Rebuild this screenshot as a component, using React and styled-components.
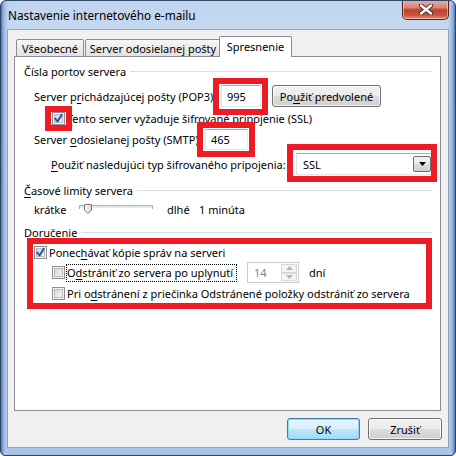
import React from 'react';
import styled, { createGlobalStyle } from 'styled-components';

const FONT = `"Noto Sans", "Liberation Sans", sans-serif`;

const Global = createGlobalStyle`
  html, body { margin: 0; padding: 0; background: #ffffff; }
  body { font-family: ${FONT}; font-size: 11px; color: #000; }
  * { box-sizing: border-box; }
  u { text-decoration: underline; text-underline-offset: 2px; }
`;

const Window = styled.div`
  position: relative;
  width: 456px;
  height: 456px;
  border: 1px solid #2f4566;
  border-radius: 6px 6px 5px 5px;
  background:
    linear-gradient(90deg, #4a70a8 0px, #8aabd8 2px, #b4cae8 5px, rgba(190,210,236,0) 8px,
      rgba(190,210,236,0) calc(100% - 8px), #b4cae8 calc(100% - 5px), #8aabd8 calc(100% - 2px), #4a70a8 100%),
    linear-gradient(180deg, #bfd4ee 0px, #c6d9ef 28px, #b3cbe8 60%, #a9c3e4 100%);
  padding: 0 6px 7px 6px;
  display: flex;
  flex-direction: column;
  overflow: hidden;
  font-family: ${FONT};
  font-size: 11px;
`;

const TitleBar = styled.div`
  height: 28px;
  flex: none;
  display: flex;
  align-items: flex-start;
  justify-content: space-between;
`;

const Title = styled.div`
  line-height: 29px;
  font-size: 11.8px;
  padding-left: 1px;
  color: #000;
  white-space: nowrap;
`;

const CloseBtn = styled.div`
  width: 47px;
  height: 20px;
  margin-top: -1px;
  border: 1px solid #5b2219;
  border-top: none;
  border-radius: 0 0 5px 5px;
  background: linear-gradient(180deg, #e9b0a6 0%, #d98576 40%, #c2412c 52%, #c9503a 78%, #e58a6d 100%);
  box-shadow: inset 0 0 0 1px rgba(255, 220, 210, 0.55);
  display: flex;
  align-items: center;
  justify-content: center;
`;

const Client = styled.div`
  flex: 1;
  background: #f0f0f0;
  border: 1px solid #8fa3bf;
  padding: 7px 6px 0 6px;
  display: flex;
  flex-direction: column;
`;

const TabStrip = styled.div`
  height: 20px;
  display: flex;
  align-items: flex-end;
  padding-left: 2px;
  margin-bottom: -1px;
  position: relative;
  z-index: 1;
`;

const Tab = styled.div`
  width: ${(p) => p.$w}px;
  height: ${(p) => (p.$active ? 21 : 18)}px;
  margin-left: ${(p) => p.$ml || 0}px;
  border: 1px solid #898c95;
  border-bottom: ${(p) => (p.$active ? 'none' : '1px solid #898c95')};
  border-radius: 2px 2px 0 0;
  background: ${(p) => (p.$active ? '#ffffff' : 'linear-gradient(180deg, #f7f7f7 0%, #ececec 50%, #e2e2e2 100%)')};
  display: flex;
  align-items: center;
  justify-content: center;
  padding-bottom: ${(p) => (p.$active ? 2 : 0)}px;
  white-space: nowrap;
`;

const Panel = styled.div`
  width: 427px;
  height: 355px;
  background: #ffffff;
  border: 1px solid #898c95;
  padding: 6px 8px 0 9px;
  display: flex;
  flex-direction: column;
`;

const GroupHeader = styled.div`
  height: 16px;
  margin-top: ${(p) => p.$mt || 0}px;
  display: flex;
  align-items: center;
  white-space: nowrap;
`;

const HeaderLine = styled.div`
  flex: 1;
  height: 1px;
  background: #d5dfe5;
  margin-left: 4px;
`;

const Row = styled.div`
  height: ${(p) => p.$h}px;
  margin-top: ${(p) => p.$mt}px;
  padding-left: ${(p) => p.$indent || 0}px;
  display: flex;
  align-items: center;
  white-space: nowrap;
`;

const Label = styled.span`
  flex: none;
  width: ${(p) => (p.$w ? `${p.$w}px` : 'auto')};
  margin-left: ${(p) => p.$ml || 0}px;
  color: #000;
  white-space: nowrap;
`;

const TextBox = styled.div`
  width: ${(p) => p.$w}px;
  height: ${(p) => p.$h}px;
  flex: none;
  border: 1px solid #e3e9ef;
  border-top-color: #abadb3;
  border-left-color: #e2e3ea;
  background: #fff;
  display: flex;
  align-items: center;
  padding-left: 5px;
`;

const Button = styled.div`
  width: ${(p) => p.$w}px;
  height: 22px;
  flex: none;
  margin-left: ${(p) => p.$ml || 0}px;
  border: 1px solid ${(p) => (p.$default ? '#3c7fb1' : '#707070')};
  border-radius: 3px;
  background: ${(p) =>
    p.$default
      ? 'linear-gradient(180deg, #eaf6fd 0%, #d9f0fc 48%, #bee6fd 52%, #a7d9f5 100%)'
      : 'linear-gradient(180deg, #f2f2f2 0%, #ebebeb 48%, #dddddd 52%, #cfcfcf 100%)'};
  box-shadow: ${(p) =>
    p.$default ? 'inset 0 0 0 1px #8ed8f8' : 'inset 0 0 0 1px rgba(255,255,255,0.75)'};
  display: flex;
  align-items: center;
  justify-content: center;
  white-space: nowrap;
`;

const CheckBoxBox = styled.span`
  position: relative;
  width: 13px;
  height: 13px;
  flex: none;
  border: 1px solid #8e8f8f;
  background: linear-gradient(135deg, #cdd0d4 0%, #e9eaeb 55%, #f6f6f6 100%);
  box-shadow: inset 0 0 0 1px #f4f4f4, inset 0 0 0 2px #b6b9bd;
  display: flex;
  align-items: center;
  justify-content: center;
`;

const Combo = styled.div`
  width: 138px;
  height: 22px;
  flex: none;
  border: 1px solid #e3e9ef;
  border-top-color: #abadb3;
  border-left-color: #e2e3ea;
  background: #fff;
  display: flex;
  align-items: center;
  justify-content: space-between;
  padding: 0 2px 0 6px;
`;

const DropBtn = styled.div`
  width: 18px;
  height: 16px;
  border: 1px solid #707070;
  border-radius: 2px;
  background: linear-gradient(180deg, #f2f2f2 0%, #ebebeb 48%, #dddddd 52%, #cfcfcf 100%);
  display: flex;
  align-items: center;
  justify-content: center;
`;

const Spin = styled.div`
  width: 52px;
  height: 21px;
  flex: none;
  margin-left: 10px;
  border: 1px solid #c9cbce;
  background: #fff;
  display: flex;
  align-items: stretch;
  justify-content: space-between;
  padding: 1px 1px 1px 6px;
`;

const SpinText = styled.span`
  align-self: center;
  color: #838383;
`;

const SpinButtons = styled.div`
  width: 16px;
  display: flex;
  flex-direction: column;
`;

const SpinPart = styled.div`
  flex: 1;
  border: 1px solid #d9d9d9;
  background: #f4f4f4;
  display: flex;
  align-items: center;
  justify-content: center;
`;

const FocusLabel = styled.span`
  flex: none;
  width: 171px;
  height: 18px;
  margin-left: 1px;
  outline: 1px dotted #000;
  outline-offset: -1px;
  display: flex;
  align-items: center;
  padding-left: 1px;
`;

const RedBox = styled.div`
  position: absolute;
  left: ${(p) => p.$x - 1}px;
  top: ${(p) => p.$y - 1}px;
  width: ${(p) => p.$w}px;
  height: ${(p) => p.$h}px;
  border: 6px solid #ed1c24;
  pointer-events: none;
`;

const Footer = styled.div`
  margin-top: 7px;
  display: flex;
  justify-content: flex-end;
  gap: 8px;
`;

function CheckBox({ checked }) {
  return (
    <CheckBoxBox>
      {checked && (
        <svg width="11" height="11" viewBox="0 0 11 11" style={{ position: 'absolute', left: 0, top: 0 }}>
          <path d="M2.2 5.6 L4.6 8.4 L8.8 1.8" fill="none" stroke="#9fb2dc" strokeWidth="2.6" strokeLinecap="round" strokeLinejoin="round" />
          <path d="M2.2 5.6 L4.6 8.4 L8.8 1.8" fill="none" stroke="#2f4a96" strokeWidth="1.6" strokeLinecap="round" strokeLinejoin="round" />
        </svg>
      )}
    </CheckBoxBox>
  );
}

function SliderDrawing() {
  return (
    <svg width="74" height="16" viewBox="0 0 74 16">
      <rect x="0.5" y="4.5" width="73" height="3" fill="#e7eaea" stroke="#b0b0b0" />
      <line x1="1" y1="7.5" x2="73" y2="7.5" stroke="#ffffff" />
      <defs>
        <linearGradient id="thumbG" x1="0" y1="0" x2="1" y2="0">
          <stop offset="0" stopColor="#fbfbfb" />
          <stop offset="1" stopColor="#d8d8d8" />
        </linearGradient>
      </defs>
      <path d="M5.5 3.5 H12.5 V9 L9 12.5 L5.5 9 Z" fill="url(#thumbG)" stroke="#7c7c7c" />
    </svg>
  );
}

export default function App() {
  return (
    <>
      <Global />
      <Window>
        <TitleBar>
          <Title>Nastavenie internetového e-mailu</Title>
          <CloseBtn>
            <svg width="14" height="11" viewBox="0 0 14 11">
              <path d="M2 1.5 L12 9.5 M12 1.5 L2 9.5" stroke="#4a2a26" strokeWidth="4.2" strokeLinecap="round" />
              <path d="M2 1.5 L12 9.5 M12 1.5 L2 9.5" stroke="#ffffff" strokeWidth="2.4" strokeLinecap="round" />
            </svg>
          </CloseBtn>
        </TitleBar>
        <Client>
          <TabStrip>
            <Tab $w={68}>Všeobecné</Tab>
            <Tab $w={136} $ml={1}>Server odosielanej pošty</Tab>
            <Tab $w={73} $ml={-2} $active>Spresnenie</Tab>
          </TabStrip>
          <Panel>
            <GroupHeader>
              Čísla portov servera
              <HeaderLine />
            </GroupHeader>
            <Row $h={22} $mt={6} $indent={10}>
              <Label $w={187}>Server p<u>r</u>ichádzajúcej pošty (POP3):</Label>
              <TextBox $w={40} $h={22}>995</TextBox>
              <Button $w={109} $ml={11}>Po<u>u</u>žiť predvolené</Button>
            </Row>
            <Row $h={15} $mt={4} $indent={28}>
              <CheckBox checked />
              <Label $ml={2}><u>T</u>ento server vyžaduje šifrované pripojenie (SSL)</Label>
            </Row>
            <Row $h={21} $mt={3} $indent={10}>
              <Label $w={171}>Server <u>o</u>dosielanej pošty (SMTP):</Label>
              <TextBox $w={43} $h={21}>465</TextBox>
            </Row>
            <Row $h={22} $mt={3} $indent={27}>
              <Label $w={245}><u>P</u>oužiť nasledujúci typ šifrovaného pripojenia:</Label>
              <Combo>
                SSL
                <DropBtn>
                  <svg width="7" height="4" viewBox="0 0 7 4">
                    <path d="M0 0 H7 L3.5 4 Z" fill="#000" />
                  </svg>
                </DropBtn>
              </Combo>
            </Row>
            <GroupHeader $mt={7}>
              <span><u>Č</u>asové limity servera</span>
              <HeaderLine />
            </GroupHeader>
            <Row $h={16} $mt={3} $indent={10}>
              <Label $w={45}>krátke</Label>
              <SliderDrawing />
              <Label $w={32} $ml={14}>dlhé</Label>
              <Label>1 minúta</Label>
            </Row>
            <GroupHeader $mt={7}>
              Doručenie
              <HeaderLine />
            </GroupHeader>
            <Row $h={15} $mt={5} $indent={10}>
              <CheckBox checked />
              <Label $ml={2}>Ponec<u>h</u>ávať kópie správ na serveri</Label>
            </Row>
            <Row $h={21} $mt={2} $indent={28}>
              <CheckBox />
              <FocusLabel>O<u>d</u>strániť zo servera po uplynutí</FocusLabel>
              <Spin>
                <SpinText>14</SpinText>
                <SpinButtons>
                  <SpinPart>
                    <svg width="7" height="4" viewBox="0 0 7 4"><path d="M0 4 H7 L3.5 0 Z" fill="#b4b4b4" /></svg>
                  </SpinPart>
                  <SpinPart>
                    <svg width="7" height="4" viewBox="0 0 7 4"><path d="M0 0 H7 L3.5 4 Z" fill="#b4b4b4" /></svg>
                  </SpinPart>
                </SpinButtons>
              </Spin>
              <Label $ml={10}>dní</Label>
            </Row>
            <Row $h={15} $mt={3} $indent={28}>
              <CheckBox />
              <Label $ml={2}>Pri o<u>d</u>stránení z priečinka Odstránené položky odstrániť zo servera</Label>
            </Row>
          </Panel>
          <Footer>
            <Button $w={73} $default>OK</Button>
            <Button $w={74}>Zrušiť</Button>
          </Footer>
        </Client>
        <RedBox $x={213} $y={78} $w={55} $h={37} />
        <RedBox $x={45} $y={106} $w={27} $h={25} />
        <RedBox $x={197} $y={122} $w={58} $h={35} />
        <RedBox $x={287} $y={144} $w={150} $h={38} />
        <RedBox $x={27} $y={238} $w={405} $h={71} />
      </Window>
    </>
  );
}
